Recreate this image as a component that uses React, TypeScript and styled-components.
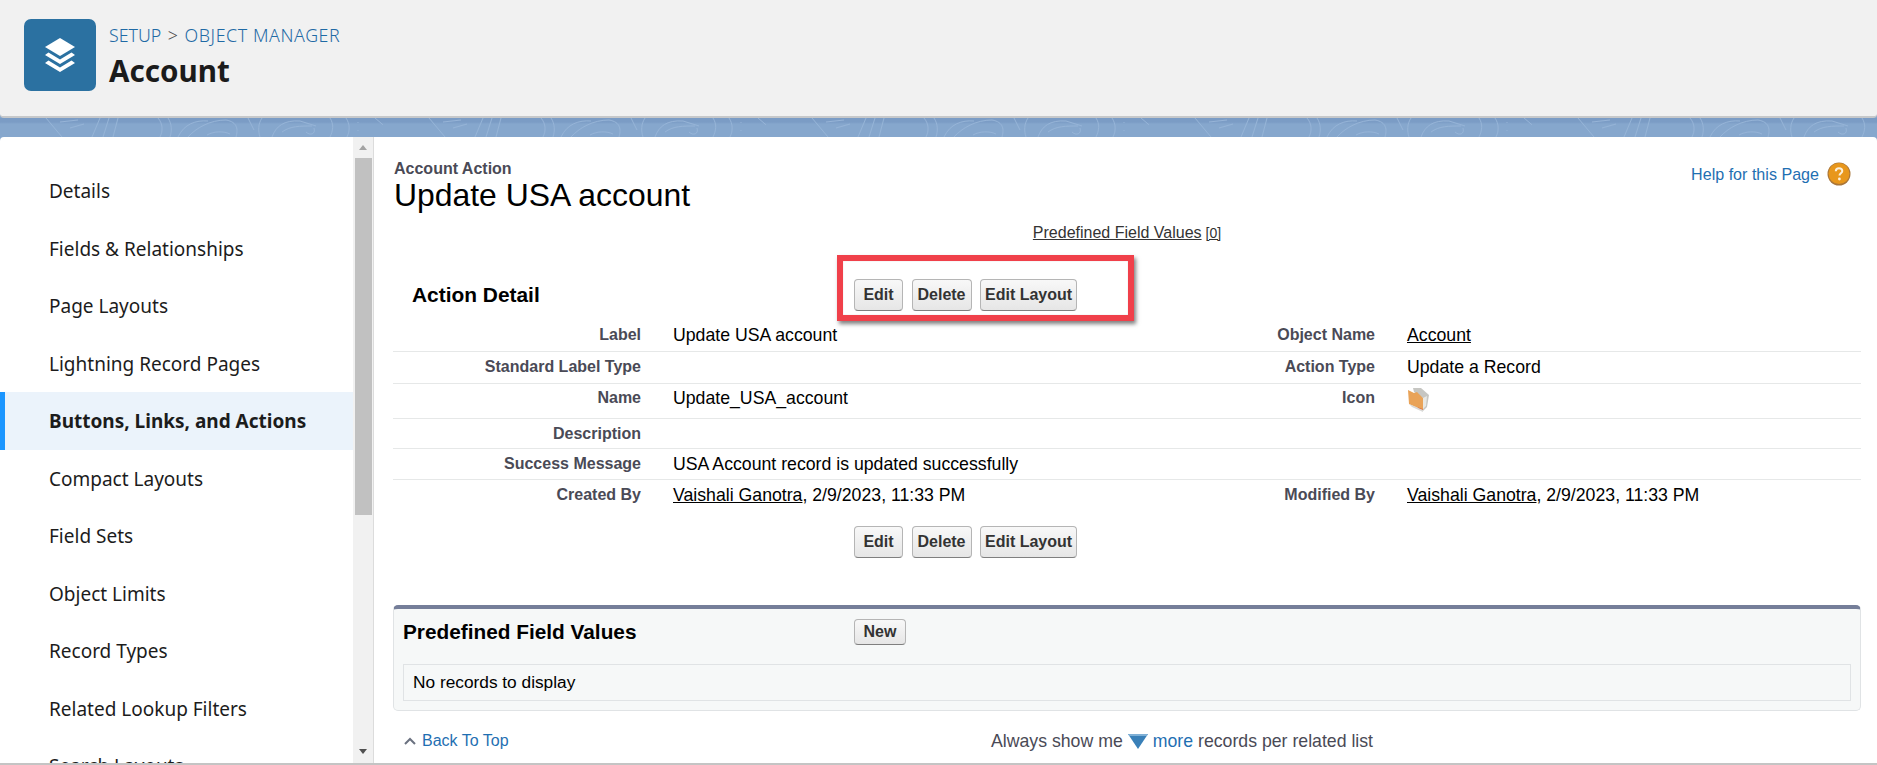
import React from "react";
import styled, { createGlobalStyle } from "styled-components";

const Global = createGlobalStyle`
  html, body { margin: 0; padding: 0; background: #fff; overflow: hidden; }
  * { box-sizing: border-box; }
`;

const Page = styled.div`
  width: 1877px;
  height: 765px;
  display: flex;
  flex-direction: column;
  overflow: hidden;
  background: #86a7cd;
  font-family: "Liberation Sans", Arial, sans-serif;
`;

const Header = styled.header`
  height: 118px;
  flex: none;
  display: flex;
  gap: 13px;
  padding: 19px 0 0 24px;
  background: #f1f1f1;
  border-bottom: 2px solid #c6c8ca;
  border-radius: 0 0 4px 4px;
`;

const AppIcon = styled.div`
  width: 72px;
  height: 72px;
  border-radius: 7px;
  background: #2b71a1;
  display: flex;
  align-items: center;
  justify-content: center;
`;

const HeaderText = styled.div`
  display: flex;
  flex-direction: column;
  font-family: "Noto Sans", "Open Sans", sans-serif;
`;

const Crumbs = styled.div`
  display: flex;
  gap: 6.5px;
  height: 32px;
  align-items: center;
  font-size: 17.8px;
  font-weight: 300;
  color: #1f6aa5;
`;

const CrumbSep = styled.span`
  color: #4a4a4a;
`;

const CrumbWide = styled.span`
  letter-spacing: 0.6px;
`;

const Title = styled.h1`
  margin: 0;
  font-size: 29.6px;
  line-height: 40px;
  font-weight: 700;
  color: #1b1b1b;
`;

const Band = styled.div`
  position: relative;
  height: 19px;
  flex: none;
  overflow: hidden;
  background: linear-gradient(#7b9cc5 0 4px, #86a7cd 6px);
`;

const BandArt = styled.svg`
  position: absolute;
  inset: 0;
  width: 100%;
  height: 100%;
`;

const Main = styled.main`
  flex: 1;
  min-height: 0;
  display: flex;
  background: #fff;
  border-radius: 4px 4px 0 0;
  border-bottom: 2px solid #c4c4c4;
`;

const Sidebar = styled.aside`
  width: 374px;
  flex: none;
  display: flex;
  border-right: 1px solid #dcdcdc;
`;

const Nav = styled.nav`
  width: 353px;
  flex: none;
  padding-top: 25px;
  overflow: hidden;
`;

const NavItem = styled.div<{ $active?: boolean }>`
  height: 57.5px;
  display: flex;
  align-items: center;
  padding-top: 1px;
  padding-left: ${(p) => (p.$active ? "44px" : "49px")};
  font-family: "Noto Sans", "Open Sans", sans-serif;
  font-size: 19px;
  font-weight: ${(p) => (p.$active ? 700 : 400)};
  color: #1c1c1c;
  background: ${(p) => (p.$active ? "#ebf3fb" : "transparent")};
  border-left: ${(p) => (p.$active ? "5px solid #1b96ff" : "0")};
  white-space: nowrap;
`;

const Track = styled.div`
  width: 20px;
  flex: none;
  display: flex;
  flex-direction: column;
  align-items: center;
  background: #f1f1f1;
`;

const TrackArrow = styled.div<{ $down?: boolean }>`
  width: 20px;
  height: 21px;
  flex: none;
  display: flex;
  justify-content: center;
  align-items: center;
  margin-top: ${(p) => (p.$down ? "auto" : "0")};
  padding-bottom: ${(p) => (p.$down ? "2px" : "0")};
  &::after {
    content: "";
    border-left: 4.5px solid transparent;
    border-right: 4.5px solid transparent;
    border-bottom: ${(p) => (p.$down ? "0" : "5px solid #a3a3a3")};
    border-top: ${(p) => (p.$down ? "5px solid #505050" : "0")};
  }
`;

const Thumb = styled.div`
  width: 17px;
  height: 357px;
  flex: none;
  background: #c1c1c1;
`;

const Content = styled.section`
  position: relative;
  flex: 1;
  min-width: 0;
  padding: 23px 16px 0 19px;
`;

const TitleRow = styled.div`
  display: flex;
  justify-content: space-between;
  height: 55px;
`;

const TitleBlock = styled.div`
  margin-left: 1px;
`;

const Kicker = styled.div`
  font-size: 16px;
  line-height: 18px;
  font-weight: 700;
  color: #4a4a56;
`;

const PageTitle = styled.h2`
  margin: 0;
  font-size: 31.9px;
  line-height: 34px;
  font-weight: 400;
  color: #000;
`;

const Help = styled.a`
  display: flex;
  align-items: center;
  gap: 8px;
  height: 24px;
  margin: 2px 10px 0 0;
  font-size: 16.1px;
  color: #1f6fb2;
`;

const LinkRow = styled.div`
  margin-top: 8px;
  height: 20px;
  display: flex;
  justify-content: center;
  align-items: baseline;
  gap: 4px;
  font-size: 16px;
  line-height: 20px;
  color: #333;
`;

const Underlined = styled.span`
  text-decoration: underline;
`;

const Count = styled.span`
  font-size: 14px;
  text-decoration: underline;
`;

const DetailHead = styled.div`
  margin-top: 36px;
  display: grid;
  grid-template-columns: 461px 1fr;
  align-items: center;
  height: 32px;
`;

const SectionTitle = styled.h3`
  margin: 0;
  padding-left: 19px;
  font-size: 20.9px;
  font-weight: 700;
  color: #000;
`;

const ButtonGroup = styled.div`
  display: flex;
  gap: 8.5px;
`;

const Btn = styled.button<{ $min?: number }>`
  height: 32px;
  min-width: ${(p) => p.$min ?? 0}px;
  padding: 0 4px;
  border: 1px solid #b5b5b5;
  border-bottom-color: #7f7f7f;
  border-radius: 4px;
  background: linear-gradient(#f8f8f8, #e6e6e6);
  font-family: inherit;
  font-size: 16px;
  font-weight: 700;
  color: #333;
`;

const Rows = styled.div`
  margin-top: 8px;
`;

const Row = styled.div<{ $h: number; $pad?: number; $last?: boolean }>`
  height: ${(p) => p.$h}px;
  display: grid;
  grid-template-columns: 248px 486px 248px 1fr;
  padding-top: ${(p) => p.$pad ?? 6}px;
  border-bottom: ${(p) => (p.$last ? "0" : "1px solid #e6e8e8")};
`;

const Label = styled.div`
  text-align: right;
  font-size: 16px;
  line-height: 18px;
  font-weight: 700;
  color: #4a4a56;
`;

const Value = styled.div`
  padding-left: 32px;
  font-size: 17.7px;
  line-height: 18px;
  color: #000;
`;

const FolderWrap = styled.div`
  margin: -2px 0 0 0;
  height: 18px;
`;

const BottomButtons = styled(ButtonGroup)`
  margin: 15px 0 0 461px;
`;

const Panel = styled.div`
  margin-top: 47px;
  height: 106px;
  background: #f6f8f8;
  border: 1px solid #e0e3e5;
  border-top: 4px solid #757e99;
  border-radius: 5px;
  padding: 0 9px;
`;

const PanelHead = styled.div`
  display: grid;
  grid-template-columns: 451px 1fr;
  align-items: center;
  height: 55px;
  padding-bottom: 10px;
`;

const PanelTitle = styled.h3`
  margin: 0;
  font-size: 20.8px;
  font-weight: 700;
  color: #000;
`;

const SmallBtn = styled(Btn)`
  display: block;
  height: 26px;
`;

const EmptyBox = styled.div`
  height: 37px;
  display: flex;
  align-items: center;
  padding-left: 9px;
  background: #f6f8f8;
  border: 1px solid #e0e3e5;
  font-size: 17.3px;
  color: #000;
`;

const Footer = styled.div`
  margin-top: 19px;
  height: 22px;
  display: grid;
  grid-template-columns: 598px 1fr;
  align-items: center;
`;

const BackTop = styled.a`
  display: flex;
  align-items: center;
  gap: 6px;
  padding-left: 11px;
  font-size: 16px;
  color: #1f6fb2;
`;

const Always = styled.div`
  display: flex;
  align-items: center;
  gap: 5px;
  font-size: 17.7px;
  color: #4a4a56;
`;

const More = styled.span`
  color: #1f6fb2;
`;

const Annotation = styled.div`
  position: absolute;
  left: 463px;
  top: 118px;
  width: 297px;
  height: 66px;
  border: 6px solid #f0404a;
  box-shadow: 2px 3px 4px rgba(0, 0, 0, 0.5), inset 0 0 1px rgba(0, 0, 0, 0.3);
  pointer-events: none;
`;

const NAV = [
  "Details",
  "Fields & Relationships",
  "Page Layouts",
  "Lightning Record Pages",
  "Buttons, Links, and Actions",
  "Compact Layouts",
  "Field Sets",
  "Object Limits",
  "Record Types",
  "Related Lookup Filters",
  "Search Layouts",
];

const LayersIcon = () => (
  <svg width="32" height="36" viewBox="0 0 32 36">
    <path d="M16 1 L31 10 L16 19 L1 10 Z" fill="#fff" />
    <path d="M4.5 15.5 L16 22.5 L27.5 15.5 L31 18 L16 27 L1 18 Z" fill="#fff" />
    <path d="M4.5 23.5 L16 30.5 L27.5 23.5 L31 26 L16 35 L1 26 Z" fill="#fff" />
  </svg>
);

const HelpIcon = () => (
  <svg width="24" height="24" viewBox="0 0 24 24">
    <circle cx="12" cy="12" r="11.5" fill="#a9763a" />
    <circle cx="12" cy="11.5" r="10.5" fill="#e8971c" />
    <path
      d="M8.8 9.2 C8.8 7.2 10.3 6.2 12 6.2 C13.8 6.2 15.3 7.3 15.3 9 C15.3 11.2 12.5 11.4 12.5 13.6"
      fill="none"
      stroke="#fdf0da"
      strokeWidth="2"
    />
    <circle cx="12.4" cy="17" r="1.4" fill="#fdf0da" />
  </svg>
);

const FolderIcon = () => (
  <svg width="24" height="25" viewBox="0 0 24 25">
    <path d="M6 1 L14 1 L22 8 L20 20 L16 24 L16 11 L7 5 Z" fill="#c6c6c2" />
    <path d="M16 11 L20 9 L19 19 L16 22 Z" fill="#e8e8e4" />
    <path d="M1 3 L7 6 L10 5 L16 11 L16 23 L2 17 Z" fill="#e9a358" />
    <path d="M10 20 L16 22 L16 23 L12 21.5 Z" fill="#e2703f" />
    <path d="M2 17 L16 23 L16 25 L5 20 Z" fill="#c9c9c6" opacity="0.7" />
  </svg>
);

const CaretUp = () => (
  <svg width="12" height="8" viewBox="0 0 12 8">
    <path d="M1 7 L6 2 L11 7" fill="none" stroke="#6b7280" strokeWidth="2" />
  </svg>
);

const MoreTriangle = () => (
  <svg width="20" height="15" viewBox="0 0 20 15">
    <path d="M0 0 H20 L10 15 Z" fill="#3a80b8" />
    <path d="M0 0 H20 L18.7 2 H1.3 Z" fill="#7fb0d6" />
  </svg>
);

const Contours = () => (
  <BandArt>
    <defs>
      <pattern id="contour" width="383" height="19" patternUnits="userSpaceOnUse">
        <g fill="none" stroke="#96b4d7" strokeWidth="1">
          <path d="M46 0 L62 19 M60 4 L78 2 M70 10 L84 6 M92 19 L100 0 M103 19 L109 0 M113 19 L118 0" />
          <path d="M158 0 C163 6 163 13 160 19 M168 0 C172 6 172 13 170 19" />
          <path d="M178 19 C184 6 196 2 208 3 M188 19 C196 10 210 2 226 2 C238 4 238 12 236 19" />
          <path d="M207 17 C214 13 224 13 230 16" />
          <path d="M248 0 L254 12 M262 0 C258 6 258 13 260 19" />
          <path d="M272 19 C276 8 284 2 300 3 L316 8 M282 14 C290 8 300 8 312 8 M306 14 C310 18 316 16 314 10" />
          <path d="M330 0 C334 6 333 13 330 19 M346 0 C350 6 350 13 347 19 M358 4 L358 5 M358 12 L358 13" />
          <path d="M375 0 L395 17" />
        </g>
      </pattern>
    </defs>
    <rect width="100%" height="100%" fill="url(#contour)" />
  </BandArt>
);

export default function App() {
  return (
    <Page>
      <Global />
      <Header>
        <AppIcon>
          <LayersIcon />
        </AppIcon>
        <HeaderText>
          <Crumbs>
            <span>SETUP</span>
            <CrumbSep>&gt;</CrumbSep>
            <CrumbWide>OBJECT MANAGER</CrumbWide>
          </Crumbs>
          <Title>Account</Title>
        </HeaderText>
      </Header>
      <Band>
        <Contours />
      </Band>
      <Main>
        <Sidebar>
          <Nav>
            {NAV.map((n) => (
              <NavItem key={n} $active={n.startsWith("Buttons")}>
                {n}
              </NavItem>
            ))}
          </Nav>
          <Track>
            <TrackArrow />
            <Thumb />
            <TrackArrow $down />
          </Track>
        </Sidebar>
        <Content>
          <TitleRow>
            <TitleBlock>
              <Kicker>Account Action</Kicker>
              <PageTitle>Update USA account</PageTitle>
            </TitleBlock>
            <Help>
              Help for this Page
              <HelpIcon />
            </Help>
          </TitleRow>
          <LinkRow>
            <Underlined>Predefined Field Values</Underlined>
            <Count>[0]</Count>
          </LinkRow>
          <DetailHead>
            <SectionTitle>Action Detail</SectionTitle>
            <ButtonGroup>
              <Btn $min={49}>Edit</Btn>
              <Btn $min={60}>Delete</Btn>
              <Btn>Edit Layout</Btn>
            </ButtonGroup>
          </DetailHead>
          <Rows>
            <Row $h={33} $pad={7}>
              <Label>Label</Label>
              <Value>Update USA account</Value>
              <Label>Object Name</Label>
              <Value>
                <Underlined>Account</Underlined>
              </Value>
            </Row>
            <Row $h={32}>
              <Label>Standard Label Type</Label>
              <Value />
              <Label>Action Type</Label>
              <Value>Update a Record</Value>
            </Row>
            <Row $h={35} $pad={5}>
              <Label>Name</Label>
              <Value>Update_USA_account</Value>
              <Label>Icon</Label>
              <Value>
                <FolderWrap>
                  <FolderIcon />
                </FolderWrap>
              </Value>
            </Row>
            <Row $h={30}>
              <Label>Description</Label>
              <Value />
              <Label />
              <Value />
            </Row>
            <Row $h={31}>
              <Label>Success Message</Label>
              <Value>USA Account record is updated successfully</Value>
              <Label />
              <Value />
            </Row>
            <Row $h={31} $last>
              <Label>Created By</Label>
              <Value>
                <Underlined>Vaishali Ganotra</Underlined>, 2/9/2023, 11:33 PM
              </Value>
              <Label>Modified By</Label>
              <Value>
                <Underlined>Vaishali Ganotra</Underlined>, 2/9/2023, 11:33 PM
              </Value>
            </Row>
          </Rows>
          <BottomButtons>
            <Btn $min={49}>Edit</Btn>
            <Btn $min={60}>Delete</Btn>
            <Btn>Edit Layout</Btn>
          </BottomButtons>
          <Panel>
            <PanelHead>
              <PanelTitle>Predefined Field Values</PanelTitle>
              <div>
                <SmallBtn $min={52}>New</SmallBtn>
              </div>
            </PanelHead>
            <EmptyBox>No records to display</EmptyBox>
          </Panel>
          <Footer>
            <BackTop>
              <CaretUp />
              Back To Top
            </BackTop>
            <Always>
              Always show me
              <MoreTriangle />
              <More>more</More> records per related list
            </Always>
          </Footer>
          <Annotation />
        </Content>
      </Main>
    </Page>
  );
}
